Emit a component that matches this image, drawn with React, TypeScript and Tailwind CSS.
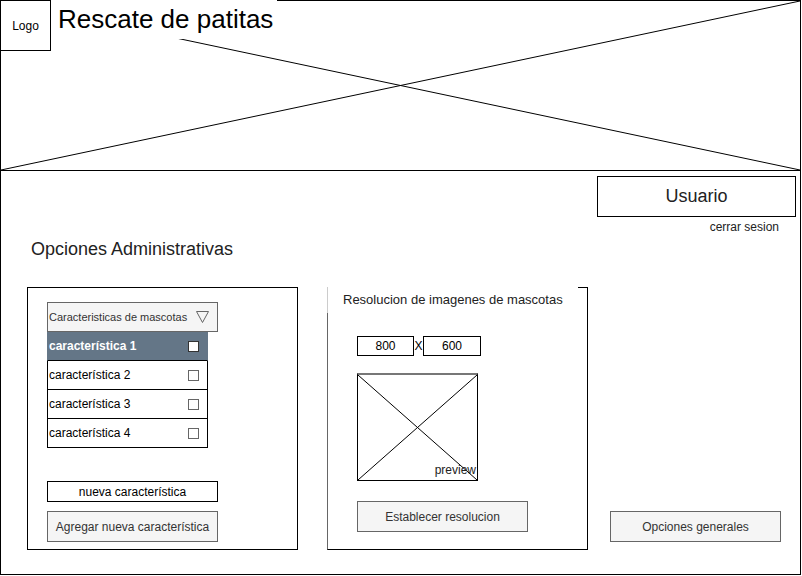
import React from 'react'

const font = { fontFamily: '"Liberation Sans", Arial, sans-serif' }

function CrossBox({ className }: { className?: string }) {
  return (
    <svg className={className} viewBox="0 0 100 100" preserveAspectRatio="none">
      <line x1="0" y1="0" x2="100" y2="100" stroke="#000" strokeWidth="1" vectorEffect="non-scaling-stroke" />
      <line x1="0" y1="100" x2="100" y2="0" stroke="#000" strokeWidth="1" vectorEffect="non-scaling-stroke" />
    </svg>
  )
}

function Checkbox({ light }: { light?: boolean }) {
  return (
    <span
      className={`w-[11px] h-[11px] border-[1.5px] ${light ? 'bg-white border-[#333]' : 'bg-white border-[#666]'}`}
    />
  )
}

const items = ['característica 1', 'característica 2', 'característica 3', 'característica 4']

export default function App() {
  return (
    <div className="w-[802px] h-[576px] bg-white text-black" style={font}>
      <div className="w-[801px] h-[575px] border border-black flex flex-col">
        {/* header banner */}
        <div className="relative h-[170px] border-b border-black shrink-0">
          <CrossBox className="absolute inset-0 w-full h-full" />
          <div className="relative flex items-start">
            <div className="w-[50px] h-[50px] border-r border-b border-black bg-white flex items-center justify-center text-[12px]">
              Logo
            </div>
            <div className="h-[39px] bg-white pl-[7px] pr-[4px] text-[26px] leading-[39px] -mt-[1px]">
              Rescate de patitas
            </div>
          </div>
        </div>

        {/* body */}
        <div className="flex-1 flex flex-col">
          <div className="self-end mt-[5px] mr-[4px] w-[199px] h-[41px] border border-black flex items-center justify-center text-[18px] text-[#222]">
            Usuario
          </div>
          <div className="self-end mr-[21px] mt-[3px] text-[12px] leading-[14px] text-[#222]">cerrar sesion</div>
          <div className="ml-[30px] mt-[5px] text-[18px] leading-[21px] text-[#222]">Opciones Administrativas</div>

          <div className="flex items-end mt-[27px] ml-[26px]">
            {/* características panel */}
            <div className="w-[271px] h-[263px] border border-black pl-[19px] pt-[14px] flex flex-col">
              <div className="w-[171px] h-[30px] bg-[#f5f5f5] border border-[#666] flex items-center justify-between pl-[1px] pr-[8px] text-[11px] text-[#333]">
                <span>Caracteristicas de mascotas</span>
                <svg width="13" height="12" viewBox="0 0 13 12">
                  <polygon points="0.5,0.5 12.5,0.5 6.5,11.5" fill="none" stroke="#666" strokeWidth="1" />
                </svg>
              </div>
              <div className="w-[161px] flex flex-col">
                {items.map((t, i) => (
                  <div
                    key={t}
                    className={`h-[29px] border-x border-b border-b-black flex items-center justify-between pl-[1px] pr-[8px] text-[12px] ${
                      i === 0 ? 'bg-[#647687] border-x-[#647687] text-white font-bold' : 'border-x-black'
                    }`}
                  >
                    <span>{t}</span>
                    <Checkbox light={i === 0} />
                  </div>
                ))}
              </div>
              <div className="mt-[33px] w-[171px] h-[21px] border border-black flex items-center justify-center text-[12px]">
                nueva característica
              </div>
              <div className="mt-[9px] w-[171px] h-[31px] bg-[#f5f5f5] border border-[#666] flex items-center justify-center text-[12px] text-[#333]">
                Agregar nueva característica
              </div>
            </div>

            {/* resolución panel */}
            <div className="ml-[29px] w-[261px] h-[263px] border border-black border-l-[#666] flex flex-col">
              <div className="-mt-px -ml-px w-[251px] h-[26px] bg-white border-l border-l-[#ccc] pl-[15px] flex items-center text-[13px] text-[#222]">
                Resolucion de imagenes de mascotas
              </div>
              <div className="pl-[29px] flex flex-col">
                <div className="mt-[23px] flex items-center text-[12px]">
                  <div className="w-[57px] h-[20px] border border-black flex items-center justify-center">800</div>
                  <span className="w-[9px] text-center leading-[12px]">X</span>
                  <div className="w-[58px] h-[20px] border border-black flex items-center justify-center">600</div>
                </div>
                <div className="relative mt-[17px] w-[121px] h-[108px] border border-black border-t-2 border-t-[#777]">
                  <CrossBox className="absolute inset-0 w-full h-full" />
                  <span className="absolute right-[1px] bottom-[3px] text-[12px] leading-[14px] text-[#222]">preview</span>
                </div>
                <div className="mt-[20px] w-[171px] h-[31px] bg-[#f5f5f5] border border-[#666] flex items-center justify-center text-[12px] text-[#333]">
                  Establecer resolucion
                </div>
              </div>
            </div>

            <div className="ml-[22px] mb-[8px] w-[171px] h-[31px] bg-[#f5f5f5] border border-[#666] flex items-center justify-center text-[12px] text-[#333]">
              Opciones generales
            </div>
          </div>
        </div>
      </div>
    </div>
  )
}
